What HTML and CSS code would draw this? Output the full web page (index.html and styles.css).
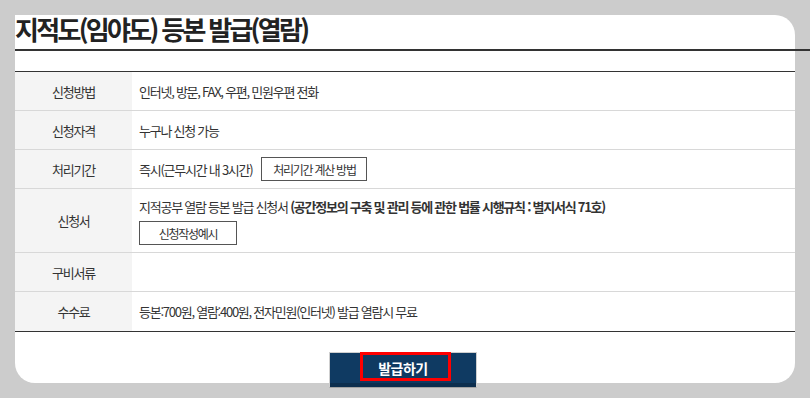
FILE: index.html
```html
<!DOCTYPE html>
<html lang="ko">
<head>
<meta charset="utf-8">
<link rel="stylesheet" href="styles.css">
</head>
<body>
<div class="card">
  <h1 class="title">지적도(임야도) 등본 발급(열람)</h1>
  <div class="thick"></div>
  <div class="table">
    <div class="row">
      <div class="th">신청방법</div>
      <div class="td">인터넷, 방문, FAX, 우편, 민원우편 전화</div>
    </div>
    <div class="row">
      <div class="th">신청자격</div>
      <div class="td">누구나 신청 가능</div>
    </div>
    <div class="row">
      <div class="th">처리기간</div>
      <div class="td">즉시(근무시간 내 3시간) <span class="box box-calc">처리기간 계산 방법</span></div>
    </div>
    <div class="row row-tall">
      <div class="th">신청서</div>
      <div class="td td-col">
        <div>지적공부 열람 등본 발급 신청서 <b>(공간정보의 구축 및 관리 등에 관한 법률 시행규칙 : 별지서식 71호)</b></div>
        <span class="box box-ex">신청작성예시</span>
      </div>
    </div>
    <div class="row">
      <div class="th">구비서류</div>
      <div class="td"></div>
    </div>
    <div class="row row-last">
      <div class="th">수수료</div>
      <div class="td">등본:700원, 열람:400원, 전자민원(인터넷) 발급 열람시 무료</div>
    </div>
  </div>
  <div class="actions">
    <div class="btn">발급하기<span class="hl"></span></div>
  </div>
</div>
</body>
</html>
```
FILE: styles.css
```css
html, body {
  margin: 0;
  padding: 0;
  background: #cccccc;
  overflow: hidden;
  height: 398px;
}
body {
  font-family: "Noto Sans CJK KR", "Noto Sans", sans-serif;
  color: #333;
}
.card {
  margin: 15px 15px 0 15px;
  width: 780px;
  height: 368px;
  background: #fff;
  border-radius: 0 20px 20px 20px;
  display: flex;
  flex-direction: column;
}
.title {
  margin: -6px 0 0 0;
  font-size: 26px;
  font-weight: 700;
  line-height: 40px;
  height: 41px;
  letter-spacing: -2.7px;
  color: #222;
  white-space: nowrap;
}
.thick {
  height: 2px;
  background: #333;
  margin-right: -15px;
  flex: none;
}
.table {
  margin-top: 20px;
  border-top: 1px solid #333;
  border-bottom: 1px solid #333;
  font-size: 13px;
  letter-spacing: -1.25px;
}
.row {
  display: flex;
  height: 38px;
  border-bottom: 1px solid #d8d8d8;
}
.row-tall { height: 63px; }
.row-last { border-bottom: none; height: 39px; }
.th {
  width: 117px;
  flex: none;
  background: #f4f4f4;
  display: flex;
  align-items: center;
  justify-content: center;
}
.td {
  flex: 1;
  display: flex;
  align-items: center;
  padding-left: 7px;
  gap: 5px;
}
.td b { font-weight: 700; }
.td-col {
  flex-direction: column;
  align-items: flex-start;
  justify-content: center;
  gap: 5px;
  padding-top: 1px;
}
.box {
  display: inline-flex;
  align-items: center;
  justify-content: center;
  border: 1px solid #555;
  font-size: 12px;
  box-sizing: border-box;
  height: 24px;
}
.box-calc { width: 106px; margin-left: 4px; }
.box-ex { width: 98px; }
.actions {
  display: flex;
  justify-content: center;
  padding-right: 4px;
  margin-top: 20px;
}
.btn {
  position: relative;
  width: 148px;
  height: 36px;
  box-sizing: border-box;
  border: 1px solid #cfcfcf;
  border-bottom-color: #a3a3a3;
  background: linear-gradient(#0f3a62 0, #0f3a62 30px, #0c2e4e 30px);
  color: #fff;
  font-weight: 700;
  font-size: 14px;
  letter-spacing: -0.5px;
  display: flex;
  align-items: center;
  justify-content: center;
  padding-bottom: 4px;
}
.hl {
  position: absolute;
  left: 30px;
  top: -1px;
  width: 91px;
  height: 29px;
  box-sizing: border-box;
  border: 3px solid #ff0000;
}
```
